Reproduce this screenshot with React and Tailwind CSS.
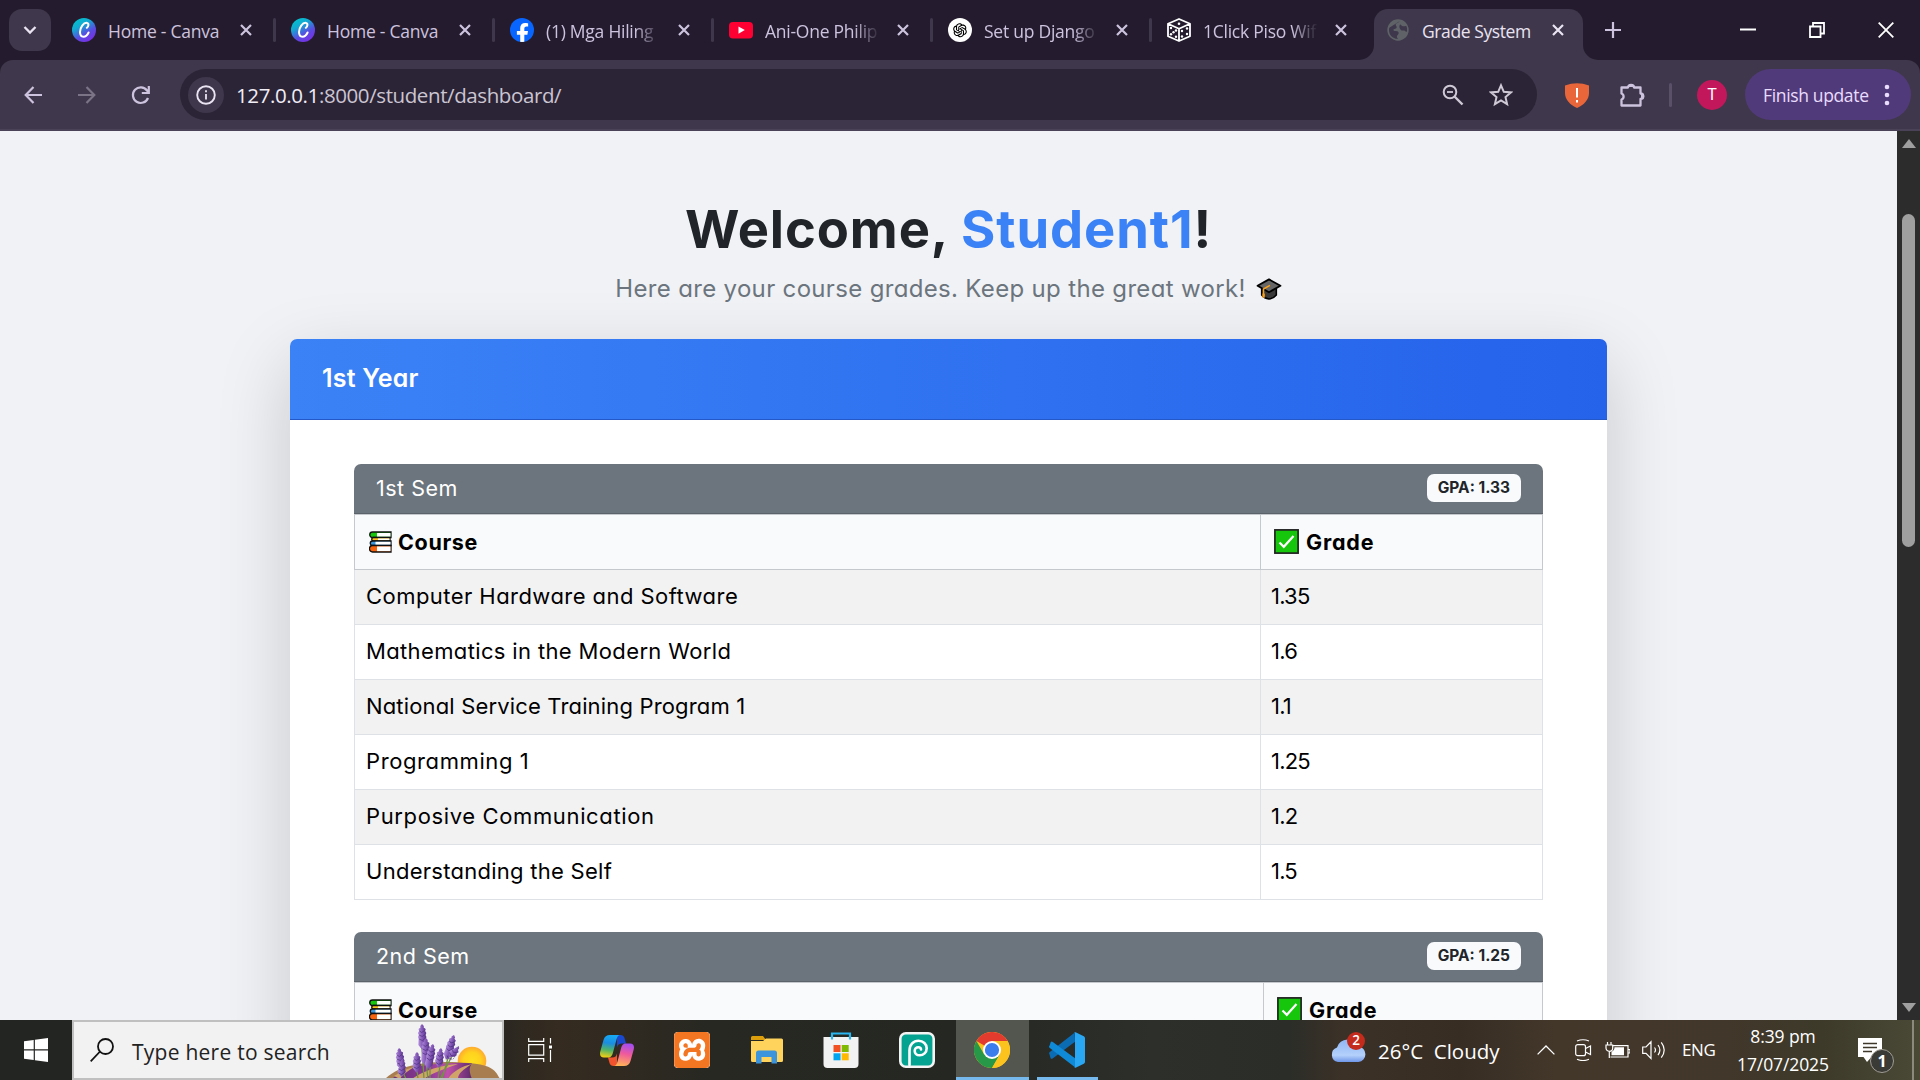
import React from 'react';
import { FaFacebookF } from 'react-icons/fa';
import { AiOutlineOpenAI } from 'react-icons/ai';
import { SiXampp } from 'react-icons/si';

/* ---------- favicons ---------- */

const CanvaIcon = () => (
  <svg viewBox="0 0 24 24" className="size-6">
    <defs>
      <linearGradient id="canva" x1="0.2" y1="0" x2="0.8" y2="1">
        <stop offset="0" stopColor="#00c4cc" />
        <stop offset="0.3" stopColor="#12aad2" />
        <stop offset="0.65" stopColor="#5a4be0" />
        <stop offset="1" stopColor="#7d2ae8" />
      </linearGradient>
    </defs>
    <circle cx="12" cy="12" r="12" fill="url(#canva)" />
    <path d="M14.800 9.800c1.800-1 2.400-4.500.2-4.900-3.400-.5-7 4.700-7 9.100 0 2.800 1.200 4.700 3.400 4.700 2.300 0 4.200-1.900 5.200-4.200" fill="none" stroke="#fff" strokeWidth="2" strokeLinecap="round" />
  </svg>
);

const FacebookIcon = () => (
  <span className="flex size-6 items-end justify-center overflow-hidden rounded-full bg-[#0866ff]">
    <FaFacebookF className="-mb-0.5 size-[21px] text-white" />
  </span>
);

const YoutubeIcon = () => (
  <svg viewBox="0 0 24 24" className="size-6">
    <rect x="0" y="4" width="24" height="16.500" rx="4" fill="#ff0033" />
    <path d="M9.500 8.500v7.200l6.300-3.600z" fill="#fff" />
  </svg>
);

const OpenAiIcon = () => (
  <span className="flex size-6 items-center justify-center rounded-full bg-white">
    <AiOutlineOpenAI className="size-[18px] text-black" />
  </span>
);

const DiceIcon = () => (
  <svg viewBox="0 0 24 24" className="size-6" fill="none" stroke="#fff" strokeWidth="1.800" strokeLinejoin="round">
    <path d="M12 1 23 5.800v12.400L12 23 1 18.200V5.800zM1 5.800l11 5 11-5M12 10.800V23" />
    <g fill="#fff" stroke="none">
      <circle cx="12" cy="5.800" r="1.300" />
      <circle cx="4" cy="10" r="1.200" />
      <circle cx="6.500" cy="14.300" r="1.200" />
      <circle cx="9" cy="18.800" r="1.200" />
      <circle cx="15" cy="13" r="1.200" />
      <circle cx="20" cy="10.500" r="1.200" />
      <circle cx="15" cy="18.500" r="1.200" />
      <circle cx="20" cy="16" r="1.200" />
      <circle cx="4" cy="16.300" r="1.200" />
      <circle cx="9" cy="12.500" r="1.200" />
    </g>
  </svg>
);

const GlobeIcon = () => (
  <svg viewBox="0 0 22 22" className="size-[22px]">
    <circle cx="11" cy="11" r="10.700" fill="#5f6368" />
    <path d="M12.500 2.200c-1 2-3.500 1.500-3.800 3.600-.1 1.200 1.200 1.500 1 2.600-.3 1.500-2.500 1-3.200 2-.6.900.6 1.700 2 1.600 2-.1 3.200.6 3.200 2.200 0 1.400-1.600 1.600-1.800 3-.1 1 .5 2 1.300 2.600C6 20.200 2 16 2 11c0-.8.100-1.600.3-2.300M13 5.500c1.500.300 1.400 1.500 3 1.800 1.200.2 2.400-.4 3.300-.2.700 1.500 1 3.800.6 5.700-1 .4-1.700-1-2.700-1.300-1.300-.3-2.400.5-3.300-.5-1.300-1.500-2.300-3.500-.9-5.500z" fill="#3f374b" />
  </svg>
);

const Close = ({ bright }) => (
  <svg viewBox="0 0 12 12" className={bright ? 'size-3 text-[#e9e3f2]' : 'size-3 text-[#cdc3de]'}>
    <path d="M1 1l10 10M11 1L1 11" stroke="currentColor" strokeWidth="2.200" fill="none" />
  </svg>
);

/* ---------- browser ---------- */

const tabs = [
  { title: 'Home - Canva', icon: <CanvaIcon /> },
  { title: 'Home - Canva', icon: <CanvaIcon /> },
  { title: '(1) Mga Hiling', icon: <FacebookIcon />, fade: true },
  { title: 'Ani-One Philip', icon: <YoutubeIcon />, fade: true },
  { title: 'Set up Django', icon: <OpenAiIcon />, fade: true },
  { title: '1Click Piso Wifi', icon: <DiceIcon />, fade: true },
];

const tabText = "mt-0.5 text-[17.5px] leading-6 tracking-[-0.25px] whitespace-pre font-['Open_Sans',sans-serif]";

function TabStrip() {
  return (
    <div className="flex h-[60px] shrink-0 items-start bg-[#241c2e]">
      <div className="mt-[9px] ml-[9px] flex h-[42px] w-[42px] shrink-0 items-center justify-center rounded-[13px] bg-[#3f374b]">
        <svg viewBox="0 0 14 10" className="h-2.5 w-3.5"><path d="M1.500 2 7 7.500 12.500 2" fill="none" stroke="#e9e3f2" strokeWidth="2.300" /></svg>
      </div>
      <div className="ml-[6px] flex h-[60px]">
        {tabs.map((t, i) => (
          <div key={i} className="flex h-[60px] w-[219px] items-center pl-[15px]">
            {t.icon}
            <div className={`ml-3 w-[117px] overflow-hidden text-[#cdc3de] ${t.fade ? '[mask-image:linear-gradient(to_right,#000_76%,transparent_98%)]' : ''}`}>
              <div className={tabText}>{t.title}</div>
            </div>
            <div className="ml-[15px]"><Close /></div>
            <div className={i < 5 ? 'ml-[21px] h-6 w-[3px] shrink-0 rounded-sm bg-[#3f374b]' : 'w-6 shrink-0'} />
          </div>
        ))}
      </div>
      <div className="relative mt-[9px] ml-[3px] flex h-[51px] w-[209px] shrink-0 items-center rounded-t-[14px] bg-[#3f374b] pb-[9px] pl-[13px]">
        <svg viewBox="0 0 15 15" className="absolute bottom-0 -left-[15px] size-[15px]"><path d="M15 0v15H0A15 15 0 0 0 15 0z" fill="#3f374b" /></svg>
        <svg viewBox="0 0 15 15" className="absolute -right-[15px] bottom-0 size-[15px]"><path d="M0 0v15h15A15 15 0 0 1 0 0z" fill="#3f374b" /></svg>
        <GlobeIcon />
        <div className="ml-[13px] w-[130px] text-[#e9e3f2]"><div className={`${tabText} !tracking-[-0.4px]`}>Grade System</div></div>
        <Close bright />
      </div>
      <svg viewBox="0 0 16 16" className="mt-[22px] ml-[22px] size-4"><path d="M8 0v16M0 8h16" stroke="#cdc3de" strokeWidth="2.200" /></svg>
      <div className="ml-auto flex h-[60px] items-center gap-[53px] pr-[26px]">
        <svg viewBox="0 0 16 16" className="size-4"><path d="M0 7.500h16" stroke="#fff" strokeWidth="2" /></svg>
        <svg viewBox="0 0 16 16" className="size-4" fill="none" stroke="#fff" strokeWidth="1.800"><path d="M1 4.500h10.500V15H1zM4 4V1h11v10.500h-3" /></svg>
        <svg viewBox="0 0 16 16" className="size-4"><path d="M.7.700l14.600 14.600M15.300.700.700 15.300" stroke="#fff" strokeWidth="1.800" /></svg>
      </div>
    </div>
  );
}

function Toolbar() {
  return (
    <div className="h-[71px] shrink-0 bg-[#241c2e]">
      <div className="flex h-[71px] items-center rounded-t-[13px] border-b-2 border-[#4a4256] bg-[#3f374b]">
        <svg viewBox="0 0 18 18" className="ml-6 size-[18px]"><path d="M9.500 1 1.700 9l7.800 8M2 9h16" fill="none" stroke="#cdc3de" strokeWidth="2.200" /></svg>
        <svg viewBox="0 0 18 18" className="ml-9 size-[18px]"><path d="M8.500 1l7.800 8-7.800 8M16 9H0" fill="none" stroke="#7b7386" strokeWidth="2.200" /></svg>
        <svg viewBox="0 0 20 20" className="ml-[35px] size-5"><path d="M17 13a7.800 7.800 0 1 1-1-7.500L17.500 7.300M17.800 1v7h-7" fill="none" stroke="#cdc3de" strokeWidth="2.200" /></svg>
        <div className="ml-[29px] flex h-[51px] w-[1357px] items-center rounded-full bg-[#2b2436] pl-2">
          <div className="flex size-9 items-center justify-center rounded-full bg-[#3f374b]">
            <svg viewBox="0 0 20 20" className="size-5"><circle cx="10" cy="10" r="8.800" fill="none" stroke="#e9e3f2" strokeWidth="1.900" /><path d="M10 9v5.500M10 5.300v2" stroke="#e9e3f2" strokeWidth="1.800" /></svg>
          </div>
          <div className="ml-3 text-[20.5px] leading-6 tracking-[-0.4px] whitespace-pre text-[#cbc5d2] font-['Open_Sans',sans-serif]">
            <span className="text-[#f1edf6]">127.0.0.1</span>:8000/student/dashboard/
          </div>
          <svg viewBox="0 0 22 22" className="ml-auto size-[22px]" fill="none" stroke="#cfc9d6"><circle cx="8" cy="8" r="6.300" strokeWidth="2" /><path d="M5 8h6" strokeWidth="1.800" /><path d="M12.500 12.500 20.500 20.500" strokeWidth="2.400" /></svg>
          <svg viewBox="0 0 24 24" className="mr-6 ml-[25px] size-6"><path d="M12 2.300l2.800 6.500 7.100.6-5.400 4.700 1.600 7L12 17.400l-6.100 3.700 1.600-7-5.400-4.700 7.100-.6z" fill="none" stroke="#cfc9d6" strokeWidth="2" /></svg>
        </div>
        <svg viewBox="0 0 26 26" className="ml-[27px] size-[26px]"><path d="M1 3.500Q13-.8 25 3.500V11c0 6.500-5 12-12 15C6 23 1 17.500 1 11z" fill="#e8663a" /><path d="M13 6v9.500M13 18v2.600" stroke="#fff" strokeWidth="2" /></svg>
        <svg viewBox="0 0 26 26" className="ml-[29px] size-[26px]"><path d="M2.500 5.500H9a3 2.600 0 0 1 6 0h6.500v6a2.700 2.700 0 0 1 0 5.400V23.500h-19v-6a3.200 3.200 0 0 0 0-6z" fill="none" stroke="#cdc3de" strokeWidth="2.300" strokeLinejoin="round" /><path d="M9 5a3 3 0 0 1 6 0zM22 11a3 3 0 0 1 0 6.500z" fill="#cdc3de" /></svg>
        <div className="ml-[24px] h-6 w-[3px] rounded bg-[#5a5169]" />
        <div className="ml-[25px] flex size-[30px] items-center justify-center rounded-full bg-[#c2185b] text-[16px] text-white font-['Roboto',sans-serif]">T</div>
        <div className="ml-[18px] flex h-[51px] w-[166px] items-center rounded-full bg-[#513a79] pl-[18px]">
          <span className="w-[112px] text-[17.5px] leading-6 tracking-[-0.35px] whitespace-pre text-[#eadcff] font-['Open_Sans',sans-serif]">Finish update</span>
          <svg viewBox="0 0 6 22" className="ml-[9px] h-[22px] w-1.5" fill="#eadcff"><circle cx="3" cy="3" r="2.300" /><circle cx="3" cy="11" r="2.300" /><circle cx="3" cy="19" r="2.300" /></svg>
        </div>
      </div>
    </div>
  );
}

/* ---------- page ---------- */

const GradCap = () => (
  <svg viewBox="0 0 28 24" className="h-[22px] w-[26px]">
    <path d="M6 10v8.500c2 2.500 5 4 8 4.500 3-.5 6-2 8-4.500V10z" fill="#3a3a3a" stroke="#000" strokeWidth="1.700" />
    <path d="M14 1.500 26.500 8.500 14 15.500 1.500 8.500z" fill="#666" stroke="#000" strokeWidth="2" strokeLinejoin="round" />
    <path d="M15 8 8 12v8" fill="none" stroke="#f9a11b" strokeWidth="1.600" />
    <path d="M6.800 17h2.600v4.500H6.800z" fill="#f9a11b" />
  </svg>
);

const Books = () => (
  <svg viewBox="0 0 23 22" className="h-[22px] w-[23px]" stroke="#111" strokeWidth="1.300">
    <path d="M3.500 1H22v5.500H3.500a2.750 2.750 0 0 1 0-5.500z" fill="#16c60c" />
    <path d="M8 2h13.500v3.700H8z" fill="#fff" stroke="none" />
    <path d="M4.500 6.500H21V10H4.500a1.700 1.700 0 0 1 0-3.500z" fill="#fcc21b" />
    <path d="M9 7.500h11.500v1.700H9z" fill="#fff" stroke="none" />
    <path d="M3.500 10H22v4.500H3.500a2.200 2.200 0 0 1 0-4.500z" fill="#3a96dd" />
    <path d="M6.500 10.800h15v2.900h-15z" fill="#fff" stroke="none" />
    <path d="M3.500 14.500H22V21H3.500a3 3.250 0 0 1 0-6.500z" fill="#f7630c" />
    <path d="M8 15.500h13.500v4.600H8z" fill="#fff" stroke="none" />
  </svg>
);

const Check = () => (
  <svg viewBox="0 0 25 25" className="-mt-px size-[25px]">
    <rect x="0.900" y="0.900" width="23.200" height="23.200" fill="#16c60c" stroke="#222" strokeWidth="1.700" />
    <path d="M5.500 13.500l4.300 4.300L19.500 7" fill="none" stroke="#fff" strokeWidth="2.200" />
  </svg>
);

const poppinsLike = "font-['Inter',sans-serif] [font-feature-settings:'cv11']";

const firstSem = [
  ['Computer Hardware and Software', '1.35', 'tracking-[0.45px]'],
  ['Mathematics in the Modern World', '1.6', 'tracking-[0.36px]'],
  ['National Service Training Program 1', '1.1', 'tracking-[0.16px]'],
  ['Programming 1', '1.25', 'tracking-[0.6px]'],
  ['Purposive Communication', '1.2', 'tracking-[0.63px]'],
  ['Understanding the Self', '1.5', 'tracking-[0.27px]'],
];

function Semester({ name, gpa, rows, courseWidth, className }) {
  return (
    <div className={className}>
      <div className="flex h-[50px] items-center justify-between rounded-t-[7px] border-b border-[#5b626a] bg-[#6c757d] px-[22px]">
        <span className="-mt-px text-[21.5px] tracking-[0.5px] text-white">{name}</span>
        <span className="-mt-px flex h-7 items-center rounded-[7px] bg-[#f8fafc] px-[11px] text-[15.5px] font-bold text-[#212529]">{`GPA: ${gpa}`}</span>
      </div>
      <div className="flex h-14 border border-[#c5c9cd] bg-[#f8fafc] text-[21.5px] font-bold text-black">
        <div className={`flex shrink-0 items-center border-r border-[#c5c9cd] pl-3.5 ${courseWidth}`}>
          <Books /><span className="ml-[6px] tracking-[0.65px]">Course</span>
        </div>
        <div className="flex items-center pl-[13px]">
          <Check /><span className="ml-[7px] tracking-[0.8px]">Grade</span>
        </div>
      </div>
      {rows.map(([course, grade, track], i) => (
        <div key={course} className={`flex h-[55px] border-x border-b border-[#dee2e6] text-[22px] leading-[52px] text-black ${i % 2 ? 'bg-white' : 'bg-[#f2f2f2]'}`}>
          <div className={`shrink-0 border-r border-[#dee2e6] pl-[11px] whitespace-nowrap ${courseWidth} ${track}`}>{course}</div>
          <div className="pl-2.5 tracking-[-0.8px]">{grade}</div>
        </div>
      ))}
    </div>
  );
}

function Page() {
  return (
    <div className={`flex min-w-0 flex-1 flex-col items-center overflow-hidden bg-[#f0f2f6] ${poppinsLike}`}>
      <h1 className="mt-[68px] text-[52.5px] leading-[60px] font-bold tracking-[0.9px] whitespace-nowrap text-[#212529]">
        Welcome, <span className="text-[#3b82f6]">Student1</span>!
      </h1>
      <div className="mt-[14px] flex h-8 items-center text-[24px] leading-8 tracking-[0.33px] whitespace-nowrap text-[#6c757d]">
        Here are your course grades. Keep up the great work!
        <span className="ml-2.5"><GradCap /></span>
      </div>
      <div className="mt-[34px] h-[900px] w-[1317px] shrink-0 rounded-[7px] bg-white shadow-[0_24px_72px_rgba(0,0,0,0.175)]">
        <div className="flex h-[81px] items-center rounded-t-[7px] border-b border-[#2458c9] bg-[linear-gradient(90deg,#3b82f6,#2563eb)] pl-8 text-[25px] font-semibold tracking-[0.2px] text-white">1st Year</div>
        <div className="px-16 pt-11">
          <Semester name="1st Sem" gpa="1.33" rows={firstSem} courseWidth="w-[906px]" />
          <Semester className="mt-8" name="2nd Sem" gpa="1.25" rows={[]} courseWidth="w-[909px]" />
        </div>
      </div>
    </div>
  );
}

function Scrollbar() {
  return (
    <div className="flex w-[23px] shrink-0 flex-col items-center bg-[#2c2c2c] py-2">
      <svg viewBox="0 0 14 9" className="h-[9px] w-3.5"><path d="M7 0l7 9H0z" fill="#9f9f9f" /></svg>
      <div className="mt-[66px] h-[333px] w-[13px] rounded-full bg-[#9f9f9f]" />
      <svg viewBox="0 0 14 9" className="mt-auto h-[9px] w-3.5"><path d="M7 9l7-9H0z" fill="#9f9f9f" /></svg>
    </div>
  );
}

/* ---------- taskbar ---------- */

const sprigs = [
  [38, 2, 26, -1], [15, 26, 22, -6], [18, 36, 19, 2], [42, 16, 28, 2], [49, 22, 26, 12], [33, 30, 21, 1], [57, 26, 20, 8], [70, 13, 26, 18], [75, 24, 15, 40],
];

const Lavender = () => (
  <svg viewBox="0 0 116 57" className="h-[57px] w-[116px] shrink-0">
    <defs>
      <linearGradient id="field" x1="0" y1="0" x2="1" y2="0">
        <stop offset="0" stopColor="#6b2d7c" /><stop offset="0.450" stopColor="#8a3a94" /><stop offset="0.700" stopColor="#c050a8" /><stop offset="1" stopColor="#5d2a6d" />
      </linearGradient>
      <radialGradient id="sun"><stop offset="0" stopColor="#ffdf1f" /><stop offset="0.600" stopColor="#ffd21e" /><stop offset="1" stopColor="#ffab2e" /></radialGradient>
      <linearGradient id="sprig" x1="0" y1="0" x2="1" y2="0"><stop offset="0" stopColor="#b493dd" /><stop offset="0.500" stopColor="#8559b8" /><stop offset="1" stopColor="#553388" /></linearGradient>
    </defs>
    <circle cx="88" cy="39" r="14.300" fill="url(#sun)" />
    <path d="M1 57C20 38 60 39 85 41s27 9 31 16z" fill="#a87d4f" />
    <path d="M8 57C24 42 60 40 88 41.500 84 46 86 52 88 57z" fill="url(#field)" />
    <path d="M28 57C40 48 58 43 74 42 60 47 46 52 40 57zM64 57C68 50 78 44 88 42 78 48 74 52 74 57zM10 54c6-4 12-7 20-9-6 4-12 8-14 12z" fill="#d0a468" />
    <g stroke="#6f9440" strokeWidth="1.300" fill="none">
      <path d="M38 26 40 57M17 46 22 57M42 40 44 57M46 44 46 57M56 44 54 57M33 48 34 57M64 36 58 57M68 34 56 57" />
    </g>
    {sprigs.map(([x, y, h, r], i) => (
      <g key={i} transform={`translate(${x} ${y}) rotate(${r})`}>
        <path d={`M0 0l1.800 2-.2 1.500 2 1.500-.6 2 1.200 2-.8 2 .8 2-.6 2 .4 ${h - 20}L0 ${h}l-4-5 .4-${h - 20}-.6-2 .8-2-.8-2 1.200-2-.6-2 2-1.500-.2-1.500z`} fill="url(#sprig)" />
        <path d="M-2.500 7l2 1.500L2.500 6.500M-3 11l3 1.500 3-2M-3 15l3 1.500 3-2" stroke="#4d2f7d" strokeWidth="0.700" fill="none" />
      </g>
    ))}
  </svg>
);

const Copilot = () => (
  <svg viewBox="0 0 34 31" className="h-[31px] w-[34px]">
    <defs>
      <linearGradient id="cpA" x1="0.400" y1="0" x2="0.250" y2="1"><stop offset="0" stopColor="#17a9f3" /><stop offset="0.350" stopColor="#1b8de0" /><stop offset="0.650" stopColor="#4fb36a" /><stop offset="1" stopColor="#f7cf11" /></linearGradient>
      <linearGradient id="cpB" x1="0.600" y1="0" x2="0.400" y2="1"><stop offset="0" stopColor="#a44df0" /><stop offset="0.450" stopColor="#ef5a9c" /><stop offset="1" stopColor="#ffb357" /></linearGradient>
    </defs>
    <path d="M17 0h3.500c2 0 3.400 1 4 3l1.500 5.500h-4c-3 0-4 1-5 4z" fill="#1a49cf" />
    <path d="M17 31h-3.500c-2 0-3.400-1-4-3L8 22.500h4c3 0 4-1 5-4z" fill="#f0532d" />
    <path d="M10 0h10.500c-2.500 0-3.300 2-4 4.500L13 17.500c-1 3.500-2 5-5 5H4c-3.500 0-4.600-2.500-3.700-6L3.500 5C4.500 1.800 6.500 0 10 0z" fill="url(#cpA)" />
    <path d="M24 31H13.500c2.500 0 3.300-2 4-4.500L21 13.500c1-3.500 2-5 5-5h4c3.500 0 4.600 2.500 3.700 6L30.500 26c-1 3.200-3 5-6.500 5z" fill="url(#cpB)" />
  </svg>
);

const Xampp = () => (
  <span className="flex size-9 items-center justify-center overflow-hidden rounded-[4px] bg-white">
    <SiXampp className="size-9 shrink-0 text-[#f37623]" />
  </span>
);

const Folder = () => (
  <svg viewBox="0 0 32 28" className="h-7 w-8">
    <path d="M0 1.500A1.500 1.500 0 0 1 1.500 0H12l3 4h-15z" fill="#dd9e0b" />
    <path d="M0 5h12l3-2.500h15.500A1.500 1.500 0 0 1 32 4v20.500a1.500 1.500 0 0 1-1.500 1.500h-29A1.500 1.500 0 0 1 0 24.500z" fill="#ffd35c" />
    <path d="M5 17a2.500 2.500 0 0 1 2.500-2.500h16A2.500 2.500 0 0 1 26 17v10.500h-5.500V21h-10v6.500H5z" fill="#3b94dc" />
  </svg>
);

const Store = () => (
  <svg viewBox="0 0 36 38" className="h-[38px] w-9">
    <path d="M9 8V2.500h18V8" fill="none" stroke="#29b6f0" strokeWidth="2.200" />
    <path d="M.5 6h35v27a4 4 0 0 1-4 4h-27a4 4 0 0 1-4-4z" fill="#f2f2f2" />
    <path d="M9 5v3.500M27 5v3.500" stroke="#29b6f0" strokeWidth="2.200" />
    <path d="M10.500 14h7v7h-7z" fill="#f25022" /><path d="M18.700 14h7v7h-7z" fill="#7fba00" />
    <path d="M10.500 22.300h7v7h-7z" fill="#00a4ef" /><path d="M18.700 22.300h7v7h-7z" fill="#ffb900" />
  </svg>
);

const PicoPico = () => (
  <svg viewBox="0 0 36 36" className="size-9">
    <rect x="1.300" y="1.300" width="33.400" height="33.400" rx="5.500" fill="#04a391" stroke="#f4f4f4" strokeWidth="2.600" />
    <path d="M10.500 33V18.500c0-6 4-9.700 9-9.700 4.800 0 8.200 3.300 8.200 7.500s-3.300 7-7 7c-3.200 0-5-2-5-4.400 0-2.300 1.700-3.700 3.600-3.700 1.700 0 2.700 1 2.700 2.200" fill="none" stroke="#fff" strokeWidth="2.600" strokeLinecap="round" />
  </svg>
);

const Chrome = () => (
  <svg viewBox="0 0 36 36" className="size-9">
    <circle cx="18" cy="18" r="18" fill="#fcc31e" />
    <path d="M18 18 2.400 9a18 18 0 0 1 31.200 0z" fill="#e33b2e" />
    <path d="M2.400 9a18 18 0 0 0 15.600 27l7.800-13.500H18L10.200 22.500z" fill="#279847" />
    <path d="M18 9h15.600A18 18 0 0 1 18 36l7.800-13.500z" fill="#fcc31e" />
    <circle cx="18" cy="18" r="9" fill="#fff" />
    <circle cx="18" cy="18" r="7.100" fill="#3b7ded" />
  </svg>
);

const VsCode = () => (
  <svg viewBox="0 0 36 36" className="size-9">
    <path d="M.5 20.300 25.800.500l.2 9.200L3.600 26.400a1.500 1.500 0 0 1-2-.1L.4 22a1.400 1.400 0 0 1 .1-1.700z" fill="#0b6cb3" />
    <path d="M.5 15.700a1.400 1.400 0 0 1 0-2l1.300-3.600a1.500 1.500 0 0 1 2-.1L26 26.300v9z" fill="#0f8ad6" />
    <path d="M25.300.400c.4-.3.900-.3 1.300-.1l8.200 3.900A2.200 2.200 0 0 1 36 6v24a2.200 2.200 0 0 1-1.200 1.800l-8.200 3.900c-.4.2-.9.200-1.300-.1.500 0 .7-.6.700-1V1.500c0-.5-.2-1-.7-1.100z" fill="#2aa7f3" />
  </svg>
);

const segoe = "font-['Open_Sans',sans-serif]";

function Taskbar() {
  return (
    <div className={`flex h-[60px] shrink-0 items-center text-white ${segoe} bg-[linear-gradient(90deg,#232522_0%,#232522_24%,#352b20_29%,#312a21_32%,#272822_37%,#252722_50%,#2d302a_60%,#2a2d28_67%,#3c3127_70%,#372d23_76%,#43372a_81%,#41372a_90%,#3d3a2a_95%,#4a4936_100%)]`}>
      <div className="flex w-[72px] justify-center">
        <svg viewBox="0 0 24 24" className="size-6" fill="#fff"><path d="M0 3.300 9.700 2v9.300H0zM10.900 1.800 24 0v11.300H10.900zM0 12.500h9.700V22L0 20.700zM10.900 12.500H24V24l-13.100-1.800z" /></svg>
      </div>
      <div className="flex h-[60px] w-[432px] items-center overflow-hidden border-2 border-[#c0c0c0] bg-[#f2f2f2] pl-4">
        <svg viewBox="0 0 24 24" className="size-6 shrink-0" fill="none" stroke="#111" strokeWidth="1.800"><circle cx="15.500" cy="8.500" r="7.500" /><path d="M10 13.500.7 23.300" /></svg>
        <span className="mt-1 ml-[18px] w-[252px] shrink-0 text-[21px] leading-7 tracking-[0.25px] whitespace-nowrap text-[#222]">Type here to search</span>
        <Lavender />
      </div>
      <div className="flex items-center">
        <svg viewBox="0 0 24 24" className="ml-6 size-6" fill="none" stroke="#fff" strokeWidth="1.200"><path d="M.7 0v3.300h15V0M.7 6.700h15v10.500h-15zM.7 24v-3.300h15V24M22.500 0v5.500M22.500 12v12" /><path d="M21 7.500h3V10.500h-3z" fill="#fff" stroke="none" /></svg>
        <div className="ml-[48px]"><Copilot /></div>
        <div className="ml-10"><Xampp /></div>
        <div className="ml-[41px]"><Folder /></div>
        <div className="ml-[40px]"><Store /></div>
        <div className="ml-[40px]"><PicoPico /></div>
        <div className="ml-[21px] flex h-[60px] w-[73px] items-center justify-center border-b-[3px] border-[#76b9ed] bg-[#53554f] pt-[3px] pr-px"><Chrome /></div>
        <div className="ml-2 flex h-[60px] w-[61px] items-center justify-center border-b-[3px] border-[#76b9ed] pt-[3px] pr-0.5"><VsCode /></div>
      </div>
      <div className="ml-auto flex items-center">
        <div className="relative">
          <svg viewBox="0 0 37 28" className="h-7 w-[37px]">
            <defs><linearGradient id="cl" x1="0" y1="0" x2="0" y2="1"><stop offset="0" stopColor="#8fb6f6" /><stop offset="0.700" stopColor="#b4d0fb" /><stop offset="1" stopColor="#6f97e8" /></linearGradient></defs>
            <path d="M8 26a7.500 7.500 0 0 1-1-14.500A11.500 11.500 0 0 1 28.500 10.500 7.800 7.800 0 0 1 28.500 26z" fill="url(#cl)" />
          </svg>
          <span className="absolute -top-[4px] left-[17px] flex h-[18px] w-[18px] items-center justify-center rounded-full bg-[#c42b1c] text-[13.5px] leading-none font-semibold">2</span>
        </div>
        <span className="mt-px ml-[11px] w-[159px] text-[20.5px] leading-7 whitespace-pre">26°C  Cloudy</span>
        <svg viewBox="0 0 18 10" className="h-2.5 w-[18px]"><path d="M.6 9.400 9 1l8.400 8.400" fill="none" stroke="#fff" strokeWidth="1.300" /></svg>
        <svg viewBox="0 0 17 22" className="ml-[20px] h-[22px] w-[17px]" fill="none" stroke="#fff" strokeWidth="1.200"><rect x="0.700" y="5.700" width="9.800" height="11" rx="2" /><path d="M10.500 9.500 15.500 7v8.500l-5-2.500M2 2Q8-.5 14 2M2 20.300q6 2.500 12 0" /></svg>
        <svg viewBox="0 0 25 18" className="ml-[13px] h-[18px] w-[25px]" fill="none" stroke="#fff" strokeWidth="1.200"><path d="M8 4.700h15V16H5.500M23.500 8.500H25v3.500h-1.500M2.500 1v3M6 1v3M1 4h6.700v3a3.300 3.300 0 0 1-6.700 0zM4.300 10.500V17" /><path d="M9.500 6.300H19v8H6.500v-3.500c2-1 3-2 3-4.500z" fill="#fff" stroke="none" /></svg>
        <svg viewBox="0 0 24 20" className="ml-[12px] h-5 w-6" fill="none" stroke="#fff" strokeWidth="1.200"><path d="M.7 7v6.300H4l5 5.200V1.800L4 7zM12.500 7.500q2 2.500 0 5M16 5q3.800 5 0 10.200M19.300 2.300q5.800 7.700 0 15.400" /></svg>
        <span className="ml-[16px] w-[55px] text-[17px] tracking-[-0.4px]">ENG</span>
        <div className="flex w-[92px] flex-col items-center text-[17.5px] leading-7 tracking-[-0.1px] whitespace-nowrap"><span>8:39 pm</span><span>17/07/2025</span></div>
        <div className="relative ml-[29px]">
          <svg viewBox="0 0 24 24" className="size-6"><path d="M0 0h24v19H13.500L9 24l-3.500-5H0z" fill="#fff" /><path d="M5 5.500h14M5 9.500h14M5 13.500h9" stroke="#3f392b" strokeWidth="1.300" /></svg>
          <span className="absolute top-[11px] left-3 flex size-6 items-center justify-center rounded-full border border-[#a09d94] bg-[#3a3a36] text-[16px] leading-none font-bold">1</span>
        </div>
        <div className="mr-[6px] ml-[30px] h-[60px] w-[2px] bg-[#8b8a7d]" />
      </div>
    </div>
  );
}

export default function App() {
  return (
    <div className="flex h-[1080px] w-[1920px] flex-col overflow-hidden">
      <TabStrip />
      <Toolbar />
      <div className="flex h-[889px] shrink-0 overflow-hidden">
        <Page />
        <Scrollbar />
      </div>
      <Taskbar />
    </div>
  );
}
